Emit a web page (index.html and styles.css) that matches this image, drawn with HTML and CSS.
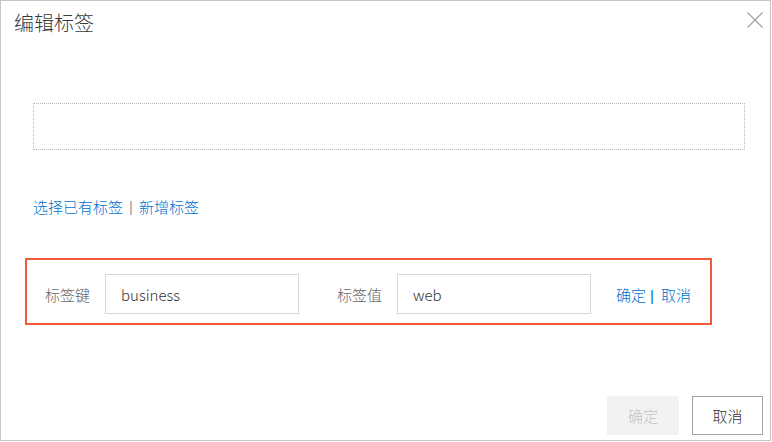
FILE: index.html
```html
<!DOCTYPE html>
<html lang="zh-CN">
<head>
<meta charset="utf-8">
<title>编辑标签</title>
<link rel="stylesheet" href="styles.css">
</head>
<body>
<div class="dialog">
  <div class="header">
    <div class="title">编辑标签</div>
    <button class="close" aria-label="关闭">
      <svg width="16" height="16" viewBox="0 0 16 16"><path d="M0.5 0.5 L15.5 15.5 M15.5 0.5 L0.5 15.5" stroke="#a0a0a0" stroke-width="1.2" fill="none"/></svg>
    </button>
  </div>
  <div class="content">
    <div class="tag-area"></div>
    <div class="tag-links">
      <a class="link">选择已有标签</a><span class="sep">|</span><a class="link">新增标签</a>
    </div>
    <div class="edit-row">
      <span class="label">标签键</span>
      <input class="field" type="text" value="business">
      <span class="label label-second">标签值</span>
      <input class="field" type="text" value="web">
      <span class="row-actions"><a class="link">确定</a><span class="row-sep">|</span><a class="link">取消</a></span>
    </div>
  </div>
  <div class="footer">
    <button class="btn btn-disabled">确定</button>
    <button class="btn btn-cancel">取消</button>
  </div>
</div>
</body>
</html>
```

FILE: styles.css
```css
html, body {
  margin: 0;
  padding: 0;
  background: #ffffff;
}

body {
  font-family: "Noto Sans CJK SC", "Liberation Sans", sans-serif;
  font-size: 15px;
  font-weight: 300;
  color: #333333;
}

.dialog {
  box-sizing: border-box;
  width: 771px;
  height: 441px;
  border: 1px solid #c6c6c6;
  display: flex;
  flex-direction: column;
  background: #ffffff;
}

.header {
  display: flex;
  justify-content: space-between;
  align-items: flex-start;
  padding: 9px 7px 0 13px;
  height: 26px;
}

.title {
  font-size: 20px;
  line-height: 26px;
  color: #3a3a3a;
}

.close {
  border: 0;
  background: transparent;
  padding: 0;
  margin-top: 2px;
  width: 16px;
  height: 16px;
  display: block;
}

.close svg {
  display: block;
}

.content {
  padding-left: 24px;
}

.tag-area {
  box-sizing: border-box;
  margin: 67px 0 0 8px;
  width: 712px;
  height: 47px;
  border: 1px dotted #b8b8b8;
}

.tag-links {
  margin: 47px 0 0 8px;
  line-height: 20px;
  display: flex;
  align-items: center;
}

.link {
  color: #0070cc;
  cursor: pointer;
}

.sep {
  color: #999999;
  margin: 0 6px;
  font-family: "Liberation Sans", sans-serif;
}

.row-sep {
  color: #0070cc;
  margin: 0 7px 0 4px;
  font-family: "Liberation Sans", sans-serif;
}

.edit-row {
  box-sizing: border-box;
  margin-top: 41px;
  width: 687px;
  height: 67px;
  border: 2px solid #f05a38;
  display: flex;
  align-items: center;
  padding: 5px 18px 0 18px;
}

.label {
  color: #666666;
  margin-right: 15px;
  white-space: nowrap;
}

.label-second {
  margin-left: 38px;
}

.field {
  box-sizing: border-box;
  width: 194px;
  height: 40px;
  border: 1px solid #d7d7d7;
  padding: 0 0 0 15px;
  font-family: "Noto Sans CJK SC", "Liberation Sans", sans-serif;
  font-size: 15px;
  font-weight: 300;
  color: #333333;
  outline: none;
  background: #ffffff;
}

.row-actions {
  margin-left: 25px;
  white-space: nowrap;
}

.footer {
  margin-top: auto;
  display: flex;
  justify-content: flex-end;
  gap: 13px;
  padding: 0 7px 5px 0;
}

.btn {
  box-sizing: border-box;
  width: 72px;
  height: 39px;
  font-family: "Noto Sans CJK SC", "Liberation Sans", sans-serif;
  font-size: 15px;
  font-weight: 300;
  padding: 0;
}

.btn-disabled {
  background: #f2f2f2;
  border: 1px solid #f2f2f2;
  color: #c4c4c4;
}

.btn-cancel {
  width: 71px;
  background: #ffffff;
  border: 1px solid #a3a3a3;
  color: #333333;
}
```
